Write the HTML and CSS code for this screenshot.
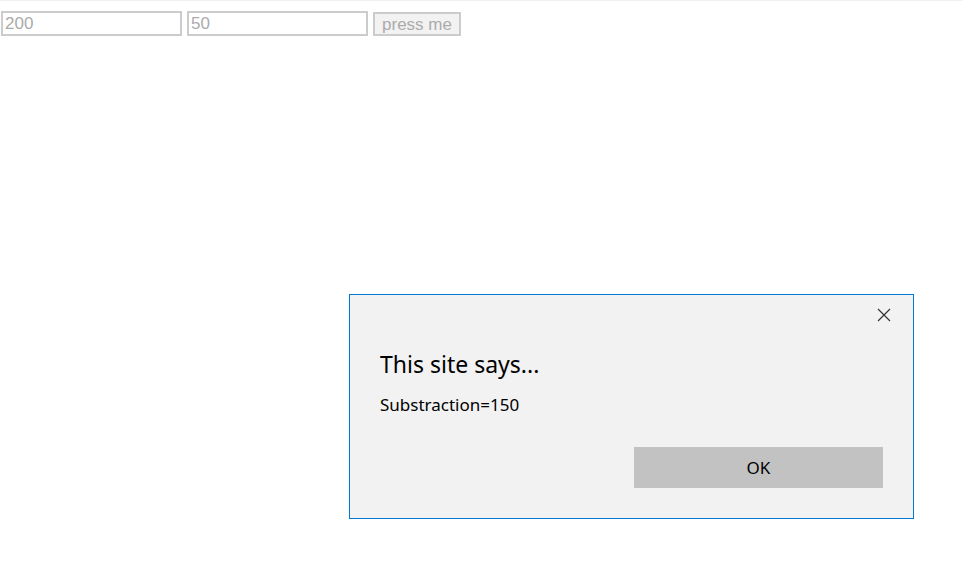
FILE: index.html
```html
<!DOCTYPE html>
<html lang="en">
<head>
    <meta charset="UTF-8">
    <meta name="viewport" content="width=device-width, initial-scale=1.0">
    <link rel="stylesheet" href="styles.css">
</head>
<body>
    <div class="calc">
        <input type="text" class="num-input" value="200">
        <input type="text" class="num-input" value="50">
        <button class="press-button">press me</button>
    </div>

    <div class="alert-dialog">
        <button class="alert-close" aria-label="Close">
            <svg width="14" height="14" viewBox="0 0 14 14">
                <path d="M1 1 L13 13 M13 1 L1 13" stroke="#333" stroke-width="1.2" fill="none"/>
            </svg>
        </button>
        <h2 class="alert-title">This site says...</h2>
        <p class="alert-message">Substraction=150</p>
        <div class="alert-actions">
            <button class="alert-ok">OK</button>
        </div>
    </div>
</body>
</html>
```

FILE: styles.css
```css
/* Base styles */
body {
    margin: 0;
    border-top: 1px solid #f2f2f2;
    background-color: #ffffff;
    font-family: 'Liberation Sans', Arial, sans-serif;
}

/* Page form (dimmed behind the alert) */
.calc {
    display: flex;
    align-items: flex-start;
    gap: 6px;
    padding: 10px 0 0 1px;
}

.num-input {
    box-sizing: border-box;
    width: 181px;
    height: 25px;
    margin: 0;
    padding: 1px 1px 0 2px;
    border: 2px solid #cccccc;
    font-family: 'Liberation Sans', Arial, sans-serif;
    font-size: 17px;
    color: #ababab;
    background-color: #ffffff;
}

.num-input + .num-input {
    margin-left: -1px;
}

.press-button {
    box-sizing: border-box;
    width: 88px;
    height: 24px;
    margin: 1px 0 0 -1px;
    padding: 2px 0 0 0;
    border: 2px solid #cccccc;
    background-color: #f2f2f2;
    font-family: 'Liberation Sans', Arial, sans-serif;
    font-size: 17px;
    line-height: 18px;
    color: #ababab;
}

/* Alert dialog */
.alert-dialog {
    position: fixed;
    left: 349px;
    top: 294px;
    box-sizing: border-box;
    width: 565px;
    height: 225px;
    padding: 52px 30px 0 30px;
    border: 1px solid #0078d7;
    background-color: #f2f2f2;
    font-family: 'Noto Sans', sans-serif;
    color: #000000;
}

.alert-close {
    position: absolute;
    top: 13px;
    right: 22px;
    padding: 0;
    border: none;
    background: none;
    line-height: 0;
}

.alert-title {
    margin: 0;
    font-size: 23px;
    font-weight: normal;
    line-height: 35px;
}

.alert-message {
    margin: 12px 0 0 0;
    font-size: 17px;
    line-height: 22px;
}

.alert-actions {
    display: flex;
    justify-content: flex-end;
    margin-top: 31px;
}

.alert-ok {
    width: 249px;
    height: 41px;
    border: none;
    background-color: #c2c2c2;
    font-family: 'Noto Sans', sans-serif;
    font-size: 17px;
    color: #000000;
}
```
